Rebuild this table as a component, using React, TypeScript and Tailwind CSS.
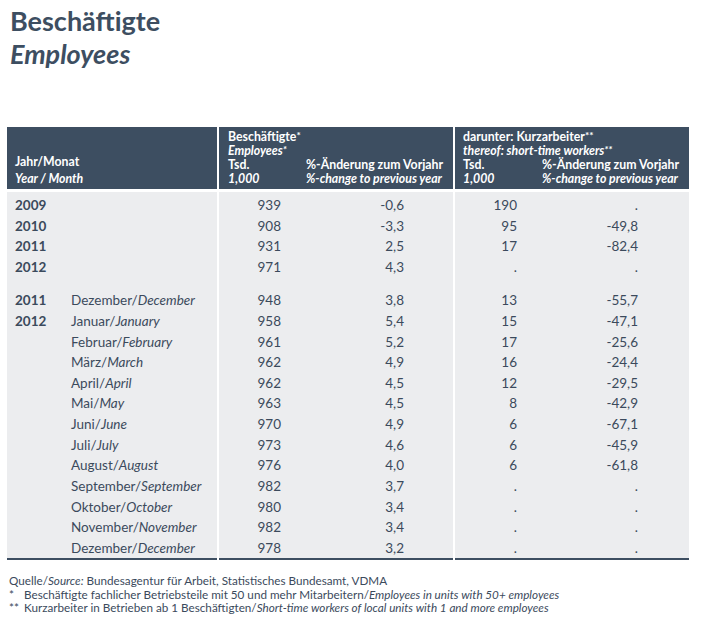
const font = { fontFamily: "Lato, 'Open Sans', sans-serif" };

type Row = { year?: string; de?: string; en?: string; tsd: string; pct: string; kTsd: string; kPct: string };

const yearRows: Row[] = [
  { year: "2009", tsd: "939", pct: "-0,6", kTsd: "190", kPct: "." },
  { year: "2010", tsd: "908", pct: "-3,3", kTsd: "95", kPct: "-49,8" },
  { year: "2011", tsd: "931", pct: "2,5", kTsd: "17", kPct: "-82,4" },
  { year: "2012", tsd: "971", pct: "4,3", kTsd: ".", kPct: "." },
];

const monthRows: Row[] = [
  { year: "2011", de: "Dezember", en: "December", tsd: "948", pct: "3,8", kTsd: "13", kPct: "-55,7" },
  { year: "2012", de: "Januar", en: "January", tsd: "958", pct: "5,4", kTsd: "15", kPct: "-47,1" },
  { de: "Februar", en: "February", tsd: "961", pct: "5,2", kTsd: "17", kPct: "-25,6" },
  { de: "März", en: "March", tsd: "962", pct: "4,9", kTsd: "16", kPct: "-24,4" },
  { de: "April", en: "April", tsd: "962", pct: "4,5", kTsd: "12", kPct: "-29,5" },
  { de: "Mai", en: "May", tsd: "963", pct: "4,5", kTsd: "8", kPct: "-42,9" },
  { de: "Juni", en: "June", tsd: "970", pct: "4,9", kTsd: "6", kPct: "-67,1" },
  { de: "Juli", en: "July", tsd: "973", pct: "4,6", kTsd: "6", kPct: "-45,9" },
  { de: "August", en: "August", tsd: "976", pct: "4,0", kTsd: "6", kPct: "-61,8" },
  { de: "September", en: "September", tsd: "982", pct: "3,7", kTsd: ".", kPct: "." },
  { de: "Oktober", en: "October", tsd: "980", pct: "3,4", kTsd: ".", kPct: "." },
  { de: "November", en: "November", tsd: "982", pct: "3,4", kTsd: ".", kPct: "." },
  { de: "Dezember", en: "December", tsd: "978", pct: "3,2", kTsd: ".", kPct: "." },
];

function DataRow({ r }: { r: Row }) {
  return (
    <div className="grid grid-cols-[210px_234px_234px] gap-x-[2px] h-[20.65px] items-center">
      <div className="flex h-full items-center bg-[#ecedef] pl-[8px]">
        <span className="w-[56px] font-bold">{r.year}</span>
        {r.de && (
          <span>
            {r.de}/<i>{r.en}</i>
          </span>
        )}
      </div>
      <div className="flex h-full items-center bg-[#ecedef]">
        <span className="w-[62px] text-right">{r.tsd}</span>
        <span className="w-[123px] text-right">{r.pct}</span>
      </div>
      <div className="flex h-full items-center bg-[#ecedef]">
        <span className="w-[62px] text-right">{r.kTsd}</span>
        <span className="w-[121px] text-right">{r.kPct}</span>
      </div>
    </div>
  );
}

function Fill({ h }: { h: string }) {
  return (
    <div className={`grid grid-cols-[210px_234px_234px] gap-x-[2px] ${h}`}>
      <div className="bg-[#ecedef]" />
      <div className="bg-[#ecedef]" />
      <div className="bg-[#ecedef]" />
    </div>
  );
}

function Star({ n }: { n: string }) {
  return <span className="inline-block align-top text-[10px] leading-[10px]">{n}</span>;
}

export default function App() {
  return (
    <div className="w-[717px] h-[628px] bg-white text-[#3b4a5c]" style={font}>
      <div className="pl-[10px] pt-[4px] text-[#3d4e61] text-[27px] font-bold leading-[33px]">
        <div>Beschäftigte</div>
        <div className="italic">Employees</div>
      </div>

      <div className="ml-[7px] mt-[57px] w-[682px]">
        {/* header */}
        <div className="grid grid-cols-[210px_234px_234px] gap-x-[2px] h-[62px] bg-white text-white text-[12.3px] font-bold">
          <div className="flex flex-col justify-end bg-[#3d4e61] pl-[8px] pb-[2px] leading-[17px]">
            <div>Jahr/Monat</div>
            <div className="italic">Year / Month</div>
          </div>
          <div className="bg-[#3d4e61] pl-[9px] pt-[3px] leading-[14px]">
            <div className="h-[14px]">
              Beschäftigte<Star n="*" />
            </div>
            <div className="h-[14px] italic">
              Employees<Star n="*" />
            </div>
            <div className="flex">
              <span className="w-[78px]">Tsd.</span>
              <span>%-Änderung zum Vorjahr</span>
            </div>
            <div className="flex italic">
              <span className="w-[78px]">1,000</span>
              <span>%-change to previous year</span>
            </div>
          </div>
          <div className="bg-[#3d4e61] pl-[8px] pt-[3px] leading-[14px]">
            <div className="h-[14px]">
              darunter: Kurzarbeiter<Star n="**" />
            </div>
            <div className="h-[14px] italic">
              thereof: short-time workers<Star n="**" />
            </div>
            <div className="flex">
              <span className="w-[79px]">Tsd.</span>
              <span>%-Änderung zum Vorjahr</span>
            </div>
            <div className="flex italic">
              <span className="w-[79px]">1,000</span>
              <span>%-change to previous year</span>
            </div>
          </div>
        </div>

        {/* body */}
        <div className="mt-[3px] text-[13.5px]">
          <Fill h="h-[3px]" />
          {yearRows.map((r, i) => (
            <DataRow key={"y" + i} r={r} />
          ))}
          <Fill h="h-[12.5px]" />
          {monthRows.map((r, i) => (
            <DataRow key={"m" + i} r={r} />
          ))}
          <div className="grid grid-cols-[210px_234px_234px] gap-x-[2px] h-[2px]">
            <div className="bg-[#3d4e61]" />
            <div className="bg-[#3d4e61]" />
            <div className="bg-[#3d4e61]" />
          </div>
        </div>
      </div>

      <div className="pl-[9px] pt-[14px] text-[11.7px] leading-[13.5px]">
        <div>
          Quelle/<i>Source:</i> Bundesagentur für Arbeit, Statistisches Bundesamt, VDMA
        </div>
        <div className="flex">
          <span className="w-[15px]">*</span>
          <span>
            Beschäftigte fachlicher Betriebsteile mit 50 und mehr Mitarbeitern/
            <i>Employees in units with 50+ employees</i>
          </span>
        </div>
        <div className="flex">
          <span className="w-[15px]">**</span>
          <span>
            Kurzarbeiter in Betrieben ab 1 Beschäftigten/
            <i>Short-time workers of local units with 1 and more employees</i>
          </span>
        </div>
      </div>
    </div>
  );
}
